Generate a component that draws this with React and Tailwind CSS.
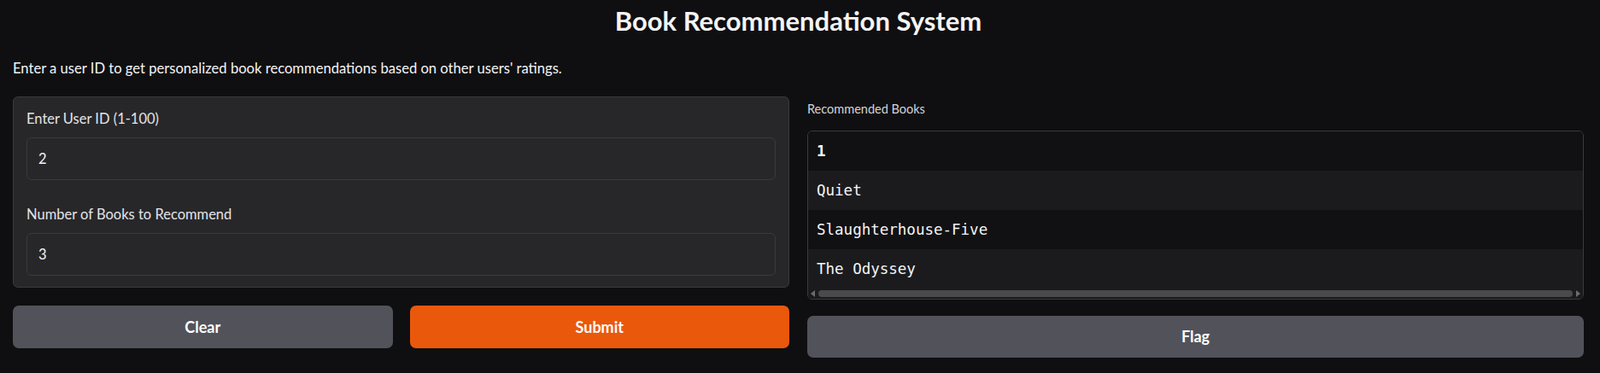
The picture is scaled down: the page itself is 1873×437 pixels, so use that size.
import React, { useState } from 'react';

const sans = "font-['Lato','Liberation_Sans',sans-serif]";
const mono = "font-['DejaVu_Sans_Mono','Liberation_Mono',monospace]";

const books = ['Quiet', 'Slaughterhouse-Five', 'The Odyssey'];

const NumberField = ({ label, value, onChange }) => (
  <div>
    <label className="block h-[22px] leading-[22px] text-[16.5px] text-[#e4e4e7]">{label}</label>
    <input
      type="text"
      value={value}
      onChange={(e) => onChange(e.target.value)}
      className="mt-[11px] block h-[50px] w-full rounded-[6px] border border-[#3a3a3e] bg-[#27272a] px-[13px] text-[16.5px] text-[#f4f4f5] outline-none"
    />
  </div>
);

const App = () => {
  const [userId, setUserId] = useState('2');
  const [count, setCount] = useState('3');

  const handleClear = () => {
    setUserId('');
    setCount('');
  };

  return (
    <div className={`min-h-[437px] w-full bg-[#0f0f11] pl-[15px] pr-[19px] text-white ${sans}`}>
      {/* Header */}
      <h1 className="h-[48px] text-center text-[31px] font-bold leading-[48px] text-[#f4f4f5]">
        Book Recommendation System
      </h1>
      <p className="mt-[20px] h-[24px] text-[16.6px] leading-[24px] text-[#f4f4f5]">
        Enter a user ID to get personalized book recommendations based on other users' ratings.
      </p>

      <div className="mt-[21px] grid grid-cols-2 gap-x-[21px]">
        {/* Left column: inputs + buttons */}
        <div>
          <div className="rounded-[6px] border border-[#3a3a3e] bg-[#27272a] px-[15px] pt-[14px] pb-[13px]">
            <NumberField label="Enter User ID (1-100)" value={userId} onChange={setUserId} />
            <div className="mt-[29px]">
              <NumberField label="Number of Books to Recommend" value={count} onChange={setCount} />
            </div>
          </div>
          <div className="mt-[21px] grid grid-cols-2 gap-x-[20px]">
            <button
              onClick={handleClear}
              className="h-[50px] rounded-[7px] bg-[#52525b] text-[18px] font-bold text-white"
            >
              Clear
            </button>
            <button className="h-[50px] rounded-[7px] bg-[#ea580c] text-[18px] font-bold text-white">
              Submit
            </button>
          </div>
        </div>

        {/* Right column: output table + flag */}
        <div>
          <div className="h-[30px] text-[14.5px] leading-[30px] text-[#d4d4d8]">Recommended Books</div>
          <div className="mt-[10px] overflow-hidden rounded-[6px] border border-[#3a3a3e]">
            <div className={`flex h-[46px] items-center bg-[#111113] px-[10px] text-[17.5px] font-bold text-white ${mono}`}>
              1
            </div>
            {books.map((b, i) => (
              <div
                key={b}
                className={`flex h-[46px] items-center px-[10px] text-[17.5px] text-[#f4f4f5] ${mono} ${
                  i % 2 === 0 ? 'bg-[#1b1b1e]' : 'bg-[#111113]'
                }`}
              >
                {b}
              </div>
            ))}
            {/* horizontal scrollbar */}
            <div className="flex h-[12px] items-center gap-[3px] bg-[#1b1b1e] px-[3px]">
              <svg width="6" height="8" viewBox="0 0 6 8" className="shrink-0">
                <path d="M5 0 L0 4 L5 8 Z" fill="#6b6b70" />
              </svg>
              <div className="h-[8px] flex-1 rounded-full bg-[#4a4a4c]" />
              <svg width="6" height="8" viewBox="0 0 6 8" className="shrink-0">
                <path d="M1 0 L6 4 L1 8 Z" fill="#6b6b70" />
              </svg>
            </div>
          </div>
          <button className="mt-[19px] h-[49px] w-full rounded-[7px] bg-[#52525b] text-[18px] font-bold text-white">
            Flag
          </button>
        </div>
      </div>
    </div>
  );
};

export default App;
